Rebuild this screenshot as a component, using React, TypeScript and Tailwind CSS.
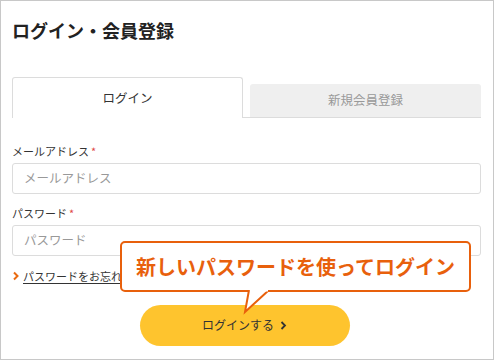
import React from 'react';

const font = { fontFamily: '"Noto Sans CJK JP", "Noto Sans", sans-serif' };

function Field({ label, placeholder }: { label: string; placeholder: string }) {
  return (
    <div>
      <div className="text-[11px] leading-[14px] text-[#333]">
        {label}
        <span className="ml-[2px] text-[#e04848]">*</span>
      </div>
      <div className="mt-[5px] flex h-[31px] items-center rounded-[3px] border border-[#dcdcdc] px-[11px] text-[12.5px] text-[#999]">
        {placeholder}
      </div>
    </div>
  );
}

export default function App() {
  return (
    <div className="bg-white" style={font}>
      <div className="relative h-[360px] w-[494px] border border-[#c8c8c8] pl-[11px] pr-[12px]">
        <h1 className="pt-[17px] text-[18px] font-bold leading-[24px] text-[#222]">
          ログイン・会員登録
        </h1>

        <div className="mt-[35px] flex items-end">
          <div className="flex h-[41px] w-[231px] items-center justify-center rounded-t-[3px] border border-b-0 border-[#dcdcdc] bg-white text-[12.5px] text-[#333]">
            ログイン
          </div>
          <div className="flex flex-1 items-end border-b border-[#dcdcdc] pl-[7px]">
            <div className="flex h-[33px] flex-1 items-center justify-center rounded-t-[3px] bg-[#efefef] text-[12.5px] text-[#999]">
              新規会員登録
            </div>
          </div>
        </div>

        <div className="mt-[26px] flex flex-col gap-[12px]">
          <Field label="メールアドレス" placeholder="メールアドレス" />
          <Field label="パスワード" placeholder="パスワード" />
        </div>

        <div className="mt-[12px] flex items-center gap-[3px] text-[11px] text-[#333]">
          <svg width="8" height="10" viewBox="0 0 8 10" fill="none">
            <path d="M2 1.5 L5.5 5 L2 8.5" stroke="#ea6a10" strokeWidth="2" />
          </svg>
          <span className="underline underline-offset-2">パスワードをお忘れの方</span>
        </div>

        <div className="mt-[20px] flex justify-center pr-[4px]">
          <div className="flex h-[41px] w-[210px] items-center justify-center gap-[6px] rounded-full bg-[#fec42e] text-[12px] text-[#333]">
            ログインする
            <svg width="7" height="9" viewBox="0 0 7 9" fill="none">
              <path d="M1.5 1 L5 4.5 L1.5 8" stroke="#333" strokeWidth="1.8" />
            </svg>
          </div>
        </div>

        <div className="absolute left-[119px] top-[240px] flex h-[51px] w-[351px] items-center justify-center rounded-[5px] border-2 border-[#e8600c] bg-white text-[20px] font-bold text-[#e8600c]">
          新しいパスワードを使ってログイン
          <svg
            className="absolute left-[120px] top-[47px]"
            width="30"
            height="26"
            viewBox="0 0 30 26"
            fill="none"
          >
            <path d="M7 0 L3 22 L27 0" fill="white" stroke="#e8600c" strokeWidth="2" />
            <path d="M8 0 L26 0" stroke="white" strokeWidth="3" />
          </svg>
        </div>
      </div>
    </div>
  );
}
